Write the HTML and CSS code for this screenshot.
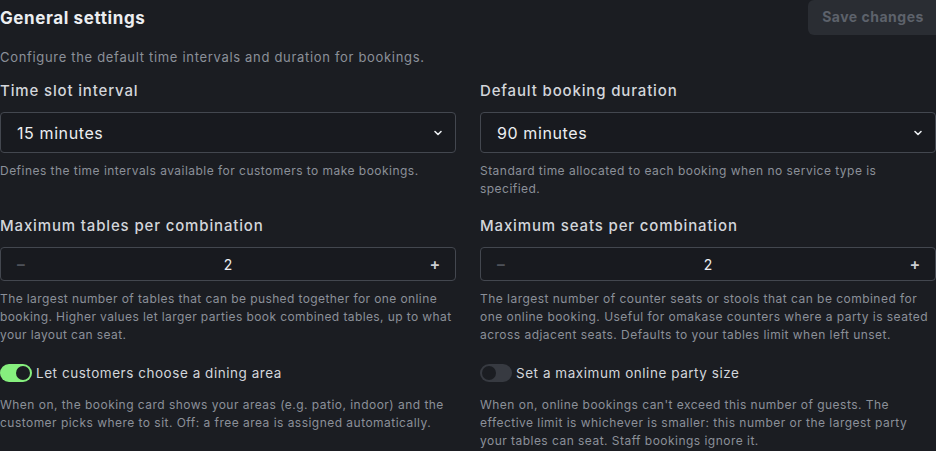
FILE: index.html
```html
<!DOCTYPE html>
<html lang="en">
<head>
    <meta charset="UTF-8">
    <meta name="viewport" content="width=device-width, initial-scale=1.0">
    <title>General settings</title>
    <link rel="stylesheet" href="styles.css">
</head>
<body>
    <div class="settings">
        <!-- Header -->
        <div class="settings-header">
            <h2>General settings</h2>
            <button class="save-btn" disabled>Save changes</button>
        </div>
        <p class="settings-desc">Configure the default time intervals and duration for bookings.</p>

        <div class="settings-grid">
            <!-- Time slot -->
            <div class="field">
                <label class="field-label">Time slot interval</label>
                <div class="select">
                    <span>15 minutes</span>
                    <svg class="chevron" width="10" height="10" viewBox="0 0 10 10"><path d="M2 3.5l3 3 3-3" fill="none" stroke="currentColor" stroke-width="1.6" stroke-linecap="round" stroke-linejoin="round"/></svg>
                </div>
                <p class="field-help">Defines the time intervals available for customers to make bookings.</p>
            </div>

            <!-- Duration -->
            <div class="field">
                <label class="field-label">Default booking duration</label>
                <div class="select">
                    <span>90 minutes</span>
                    <svg class="chevron" width="10" height="10" viewBox="0 0 10 10"><path d="M2 3.5l3 3 3-3" fill="none" stroke="currentColor" stroke-width="1.6" stroke-linecap="round" stroke-linejoin="round"/></svg>
                </div>
                <p class="field-help">Standard time allocated to each booking when no service type is specified.</p>
            </div>

            <!-- Max tables -->
            <div class="field">
                <label class="field-label">Maximum tables per combination</label>
                <div class="stepper">
                    <button class="step-btn disabled">&minus;</button>
                    <span class="step-value">2</span>
                    <button class="step-btn">+</button>
                </div>
                <p class="field-help tight">The largest number of tables that can be pushed together for one online booking. Higher values let larger parties book combined tables, up to what your layout can seat.</p>
            </div>

            <!-- Max seats -->
            <div class="field">
                <label class="field-label">Maximum seats per combination</label>
                <div class="stepper">
                    <button class="step-btn disabled">&minus;</button>
                    <span class="step-value">2</span>
                    <button class="step-btn">+</button>
                </div>
                <p class="field-help">The largest number of counter seats or stools that can be combined for one online booking. Useful for omakase counters where a party is seated across adjacent seats. Defaults to your tables limit when left unset.</p>
            </div>

            <!-- Dining area toggle -->
            <div class="field">
                <div class="toggle-row">
                    <span class="toggle on"></span>
                    <span class="toggle-label">Let customers choose a dining area</span>
                </div>
                <p class="field-help">When on, the booking card shows your areas (e.g. patio, indoor) and the customer picks where to sit. Off: a free area is assigned automatically.</p>
            </div>

            <!-- Party size toggle -->
            <div class="field">
                <div class="toggle-row">
                    <span class="toggle"></span>
                    <span class="toggle-label">Set a maximum online party size</span>
                </div>
                <p class="field-help">When on, online bookings can't exceed this number of guests. The effective limit is whichever is smaller: this number or the largest party your tables can seat. Staff bookings ignore it.</p>
            </div>
        </div>
    </div>
</body>
</html>
```

FILE: styles.css
```css
:root {
    --bg: #1b1d22;
    --bg-input: #181a1f;
    --border: #43474f;
    --text-primary: #eceef1;
    --text-label: #d3d6db;
    --text-muted: #8b9099;
    --btn-bg: #2a2d33;
    --btn-text: #5d626b;
    --green: #86ef7e;
}

body {
    margin: 0;
    background: var(--bg);
    color: var(--text-primary);
    font-family: 'Inter', 'Noto Sans', sans-serif;
    overflow: hidden;
}

.settings {
    width: 936px;
}

.settings-header {
    display: flex;
    justify-content: space-between;
    align-items: flex-start;
    height: 35px;
}

.settings-header h2 {
    margin: 8px 0 0;
    font-size: 17px;
    line-height: 20px;
    font-weight: 700;
    letter-spacing: 0.6px;
    color: var(--text-primary);
}

.save-btn {
    width: 128px;
    height: 35px;
    border: none;
    border-radius: 6px 0 0 6px;
    background: var(--btn-bg);
    color: var(--btn-text);
    font-family: inherit;
    font-size: 14px;
    font-weight: 700;
    letter-spacing: 0.5px;
    padding: 0 0 3px 2px;
}

.settings-desc {
    margin: 13px 0 0;
    font-size: 13px;
    line-height: 18px;
    letter-spacing: 0.68px;
    color: var(--text-muted);
}

.settings-grid {
    display: grid;
    grid-template-columns: 1fr 1fr;
    column-gap: 24px;
    row-gap: 18px;
    margin-top: 15px;
}

.field-label {
    display: block;
    font-size: 15px;
    font-weight: 500;
    color: var(--text-label);
    line-height: 20px;
    letter-spacing: 0.85px;
    margin-bottom: 11px;
}

.select {
    display: flex;
    justify-content: space-between;
    align-items: center;
    height: 41px;
    box-sizing: border-box;
    padding: 0 12px 0 16px;
    border: 1px solid var(--border);
    border-radius: 4px;
    background: var(--bg-input);
    font-size: 16px;
    letter-spacing: 0.6px;
    color: var(--text-primary);
}

.chevron {
    color: var(--text-primary);
}

.stepper {
    display: flex;
    align-items: center;
    height: 34px;
    box-sizing: border-box;
    border: 1px solid var(--border);
    border-radius: 4px;
    background: var(--bg-input);
}

.step-btn {
    width: 40px;
    height: 100%;
    border: none;
    background: none;
    color: #c9ccd1;
    font-family: inherit;
    font-size: 16px;
    font-weight: 600;
    padding: 0;
}

.step-btn.disabled {
    color: #4d5159;
}

.step-value {
    flex: 1;
    text-align: center;
    font-size: 14px;
    color: var(--text-primary);
}

.field-help {
    margin: 9px 0 0;
    font-size: 12px;
    line-height: 18px;
    letter-spacing: 0.47px;
    color: var(--text-muted);
}

.field-help.tight {
    letter-spacing: 0.4px;
}

.toggle-row {
    display: flex;
    align-items: center;
    gap: 4px;
    height: 20px;
    margin-top: 1px;
}

.toggle {
    position: relative;
    width: 32px;
    height: 18px;
    border-radius: 9px;
    background: #373a41;
}

.toggle::after {
    content: '';
    position: absolute;
    top: 2px;
    left: 2px;
    width: 14px;
    height: 14px;
    border-radius: 50%;
    background: var(--bg);
}

.toggle.on {
    background: var(--green);
}

.toggle.on::after {
    left: 16px;
}

.toggle-label {
    font-size: 13.5px;
    letter-spacing: 0.54px;
    color: var(--text-label);
}

.toggle-row + .field-help {
    margin-top: 13px;
}
```
